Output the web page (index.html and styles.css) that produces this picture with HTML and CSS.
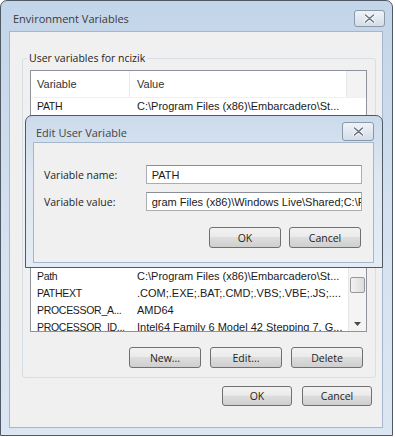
FILE: index.html
```html
<!DOCTYPE html>
<html lang="en">
<head>
    <meta charset="UTF-8">
    <title>Environment Variables</title>
    <link rel="stylesheet" href="styles.css">
</head>
<body>
    <div class="window main-window">
        <div class="titlebar">
            <span class="title">Environment Variables</span>
            <span class="close-btn">
                <svg width="11" height="9" viewBox="0 0 11 9"><path d="M1.5 1 L9.5 8 M9.5 1 L1.5 8" stroke="#fff" stroke-width="3.4" stroke-linecap="round"/><path d="M1.5 1 L9.5 8 M9.5 1 L1.5 8" stroke="#6a7480" stroke-width="1.6" stroke-linecap="round"/></svg>
            </span>
        </div>
        <div class="client">
            <fieldset class="group">
                <legend>User variables for ncizik</legend>
                <div class="listview">
                    <div class="lv-header">
                        <span class="col-var">Variable</span>
                        <span class="col-val">Value</span>
                        <span class="col-fill"></span>
                    </div>
                    <div class="lv-body">
                        <div class="lv-rows">
                            <div class="row"><span class="col-var">PATH</span><span class="col-val">C:\Program Files (x86)\Embarcadero\St...</span></div>
                            <!-- rows hidden behind the edit dialog -->
                            <div class="row"></div>
                            <div class="row"></div>
                            <div class="row"></div>
                            <div class="row"></div>
                            <div class="row"></div>
                            <div class="row"></div>
                            <div class="row"></div>
                            <div class="row"></div>
                            <div class="row"></div>
                            <div class="row"><span class="col-var">Path</span><span class="col-val">C:\Program Files (x86)\Embarcadero\St...</span></div>
                            <div class="row"><span class="col-var">PATHEXT</span><span class="col-val">.COM;.EXE;.BAT;.CMD;.VBS;.VBE;.JS;....</span></div>
                            <div class="row"><span class="col-var">PROCESSOR_A...</span><span class="col-val">AMD64</span></div>
                            <div class="row"><span class="col-var">PROCESSOR_ID...</span><span class="col-val">Intel64 Family 6 Model 42 Stepping 7, G...</span></div>
                        </div>
                        <div class="scrollbar">
                            <div class="thumb"></div>
                            <div class="arrow-down">
                                <svg width="7" height="4" viewBox="0 0 7 4"><path d="M0 0 H7 L3.5 4 Z" fill="#4a4a4a"/></svg>
                            </div>
                        </div>
                    </div>
                </div>
                <div class="btn-row group-buttons">
                    <button class="btn">New...</button>
                    <button class="btn">Edit...</button>
                    <button class="btn">Delete</button>
                </div>
            </fieldset>
            <div class="btn-row main-buttons">
                <button class="btn">OK</button>
                <button class="btn">Cancel</button>
            </div>
        </div>
    </div>

    <div class="window edit-window">
        <div class="titlebar edit-titlebar">
            <span class="title">Edit User Variable</span>
            <span class="close-btn">
                <svg width="11" height="9" viewBox="0 0 11 9"><path d="M1.5 1 L9.5 8 M9.5 1 L1.5 8" stroke="#fff" stroke-width="3.4" stroke-linecap="round"/><path d="M1.5 1 L9.5 8 M9.5 1 L1.5 8" stroke="#6a7480" stroke-width="1.6" stroke-linecap="round"/></svg>
            </span>
        </div>
        <div class="client edit-client">
            <div class="field">
                <label for="varName">Variable name:</label>
                <input type="text" id="varName" value="PATH">
            </div>
            <div class="field">
                <label for="varValue">Variable value:</label>
                <input type="text" id="varValue" value="gram Files (x86)\Windows Live\Shared;C:\P">
            </div>
            <div class="btn-row edit-buttons">
                <button class="btn">OK</button>
                <button class="btn">Cancel</button>
            </div>
        </div>
    </div>
</body>
</html>
```

FILE: styles.css
```css
body { margin: 0; background: #fff; font-family: "Open Sans", sans-serif; font-size: 10.5px; color: #1e1e1e; }

.window { box-sizing: border-box; border: 1px solid #4f5a66; border-radius: 7px 7px 0 0; background: linear-gradient(#c3d5e9, #d6e3f1 60%, #dbe6f2); padding: 0 9px 7px 8px; }
.main-window { width: 393px; height: 436px; }
.titlebar { height: 30px; display: flex; align-items: center; justify-content: space-between; }
.title { color: #3b3b3b; font-size: 11px; padding: 4px 0 0 4px; }
.close-btn { box-sizing: border-box; width: 31px; height: 17px; border: 1px solid #8a98a8; border-radius: 3px; background: linear-gradient(#eef3f8, #d3dde8); display: flex; align-items: center; justify-content: center; margin: 5px -2px 0 0; }

.client { box-sizing: border-box; background: #f0f0f0; border: 1px solid #a6b7cb; height: 397px; padding: 0 6px 0 12px; }

.group { box-sizing: border-box; width: 354px; margin: 18px 0 0; padding: 4px 8px 9px 7px; border: 1px solid #d5dfe5; border-radius: 3px; }
.group legend { padding: 0 2px; margin-left: -3px; line-height: 16px; color: #1e1e1e; }

.listview { box-sizing: border-box; height: 262px; border: 1px solid #8e9399; background: #fff; font-family: "Liberation Sans", Arial, sans-serif; font-size: 11px; color: #1a1a1a; overflow: hidden; }
.lv-header { display: flex; height: 26px; align-items: stretch; border-bottom: 1px solid #f0f0f0; }
.lv-header span { display: flex; align-items: center; border-right: 1px solid #e5e8ec; color: #333; }
.col-var { box-sizing: border-box; width: 99px; padding-left: 6px; white-space: nowrap; overflow: hidden; }
.row .col-var { font-size: 10.5px; letter-spacing: -0.3px; overflow: visible; }
.col-val { box-sizing: border-box; width: 217px; padding-left: 7px; white-space: nowrap; overflow: hidden; }
.lv-header .col-fill { flex: 1; background: #f3f3f3; border-right: none; }

.lv-body { display: flex; }
.lv-rows { flex: 1; }
.row { display: flex; height: 17px; line-height: 17px; }
.scrollbar { box-sizing: border-box; width: 18px; margin-top: 17px; height: 217px; background: #f4f4f4; border-left: 1px solid #e6e6e6; display: flex; flex-direction: column; align-items: center; }
.thumb { box-sizing: border-box; width: 15px; height: 16px; margin-top: 162px; border: 1px solid #979797; border-radius: 2px; background: linear-gradient(90deg, #f3f3f3, #dcdcdc); }
.arrow-down { margin-top: auto; height: 17px; display: flex; align-items: center; }

.btn-row { display: flex; justify-content: flex-end; }
.btn { box-sizing: border-box; height: 21px; width: 72px; border: 1px solid #707070; border-radius: 3px; background: linear-gradient(#f2f2f2 0%, #ebebeb 45%, #dddddd 50%, #cfcfcf 100%); font-family: "Open Sans", sans-serif; font-size: 10.5px; color: #1e1e1e; padding: 0; }
.group-buttons { margin-top: 15px; gap: 9px; padding-right: 4px; }
.main-buttons { margin-top: 8px; gap: 10px; padding-right: 4px; }
.main-buttons .btn { width: 70px; height: 20px; }

.edit-window { position: absolute; left: 25px; top: 115px; width: 358px; height: 153px; padding: 0 8px 5px 7px; background: linear-gradient(#cbdaeb, #dfe8f2 40%, #e3ebf4); }
.edit-titlebar { height: 26px; }
.edit-titlebar .title { padding: 6px 0 0 3px; color: #444; }
.edit-titlebar .close-btn { width: 32px; height: 19px; margin: 5px 0 0 0; }
.edit-client { height: 121px; padding: 22px 11px 0 10px; }
.field { display: flex; align-items: center; margin-bottom: 8px; }
.field label { width: 102px; }
.field input { box-sizing: border-box; width: 217px; height: 19px; border: 1px solid #abadb3; border-top-color: #8a8e96; background: #fff; font-family: "Liberation Sans", Arial, sans-serif; font-size: 11px; padding: 0 0 0 5px; color: #1a1a1a; margin: 0; }
.edit-buttons { margin-top: 16px; gap: 8px; padding-right: 1px; }
```
